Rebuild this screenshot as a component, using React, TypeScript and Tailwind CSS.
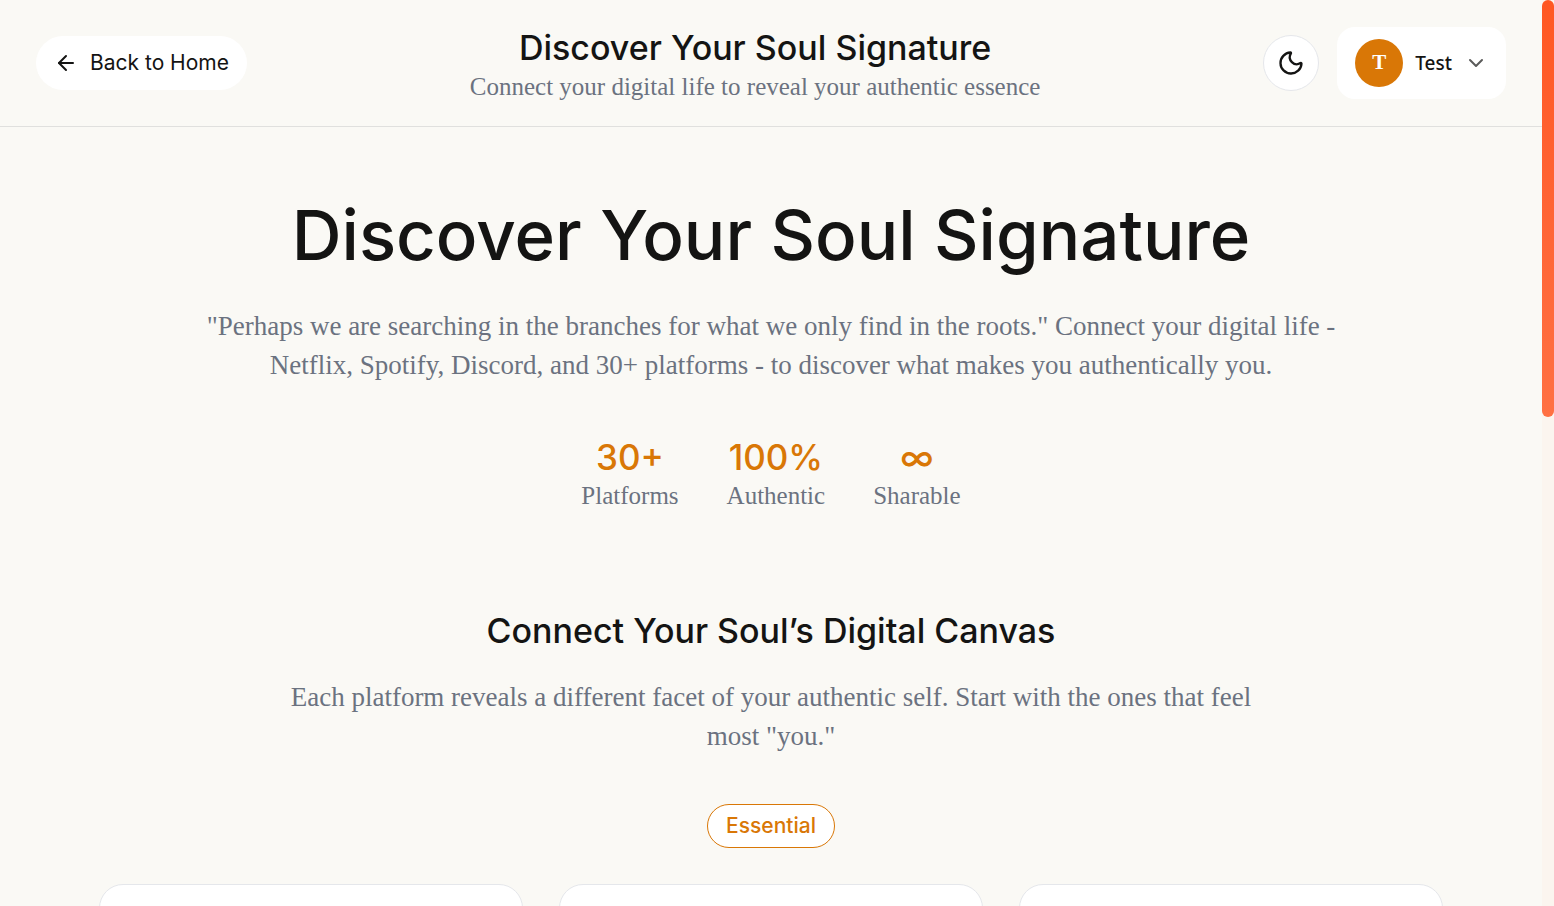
import { ArrowLeft, ChevronDown, Moon } from "lucide-react";

const display = "font-['Inter',sans-serif]";
const serif = "font-['Liberation_Serif',serif]";

const stats = [
  { value: "30+", label: "Platforms" },
  { value: "100%", label: "Authentic" },
  { value: "∞", label: "Sharable" },
];

const cards = ["first", "second", "third"];

function Header() {
  return (
    <header className="flex items-center justify-between border-b border-[#e0e0de] px-9 py-[27px]">
      <button
        type="button"
        className={`${display} flex h-[54px] items-center gap-3 rounded-full bg-white px-[18px] text-[21px] text-[#141413]`}
      >
        <ArrowLeft size={24} strokeWidth={2} aria-hidden="true" />
        Back to Home
      </button>
      <div className="text-center">
        <p className={`${display} text-[34px] leading-[42px] font-medium text-[#141413]`}>
          Discover Your Soul Signature
        </p>
        <p className={`${serif} mt-1.5 text-[25px] leading-6 text-[#6b7280]`}>
          Connect your digital life to reveal your authentic essence
        </p>
      </div>
      <div className="flex items-center gap-[18px]">
        <button
          type="button"
          aria-label="Toggle dark mode"
          className="flex size-14 items-center justify-center rounded-full border border-gray-200 bg-white text-[#141413]"
        >
          <Moon size={28} strokeWidth={2} aria-hidden="true" />
        </button>
        <button
          type="button"
          className="flex h-[72px] items-center gap-3 rounded-[18px] bg-white px-[18px] text-[#141413]"
        >
          <span
            className={`${serif} flex size-12 items-center justify-center rounded-full bg-[#d97706] text-[21px] font-bold text-white`}
          >
            T
          </span>
          <span className="font-['Noto_Sans',sans-serif] text-[19px] font-medium">Test</span>
          <ChevronDown size={24} strokeWidth={2} className="text-[#5b5b5a]" aria-hidden="true" />
        </button>
      </div>
    </header>
  );
}

export default function App() {
  return (
    <div className="flex h-screen overflow-hidden bg-[#faf9f5]">
      <div className="min-w-0 flex-1">
        <Header />
        <main className="mx-auto max-w-[1416px] px-9 pt-[72px] text-center">
          <section className="mx-auto max-w-[1160px]">
            <h1 className={`${display} text-[69px] leading-[72px] font-medium text-[#141413]`}>
              Discover Your Soul Signature
            </h1>
            <p className={`${serif} mt-9 text-[27px] leading-[39px] text-[#6b7280]`}>
              "Perhaps we are searching in the branches for what we only find in the roots." Connect
              your digital life - Netflix, Spotify, Discord, and 30+ platforms - to discover what
              makes you authentically you.
            </p>
            <dl className="mt-[50px] flex justify-center gap-12">
              {stats.map((stat) => (
                <div key={stat.label} className="flex flex-col-reverse">
                  <dt className={`${serif} text-[25px] leading-[32px] text-[#6b7280]`}>
                    {stat.label}
                  </dt>
                  <dd className={`${display} text-[35px] leading-[45px] font-medium text-[#d97706]`}>
                    {stat.value}
                  </dd>
                </div>
              ))}
            </dl>
          </section>
          <section className="mt-24">
            <h2 className={`${display} text-[34px] leading-[45px] font-medium text-[#141413]`}>
              Connect Your Soul’s Digital Canvas
            </h2>
            <p
              className={`${serif} mx-auto mt-[25px] max-w-[1008px] text-[27px] leading-[39px] text-[#6b7280]`}
            >
              Each platform reveals a different facet of your authentic self. Start with the ones
              that feel most "you."
            </p>
            <span
              className={`${display} mt-12 inline-flex h-11 items-center rounded-full border border-[#d97706] bg-white px-[18px] text-[21px] font-medium text-[#d97706]`}
            >
              Essential
            </span>
            <div className="mt-9 grid grid-cols-3 gap-9">
              {cards.map((card) => (
                <article
                  key={card}
                  className="h-80 rounded-3xl border border-gray-200 bg-white"
                />
              ))}
            </div>
          </section>
        </main>
      </div>
      <div className="w-3 shrink-0 bg-[#fbf5ef]" aria-hidden="true">
        <div className="h-[46%] rounded-full bg-linear-to-b from-[#ff5722] to-[#ff7043]" />
      </div>
    </div>
  );
}
